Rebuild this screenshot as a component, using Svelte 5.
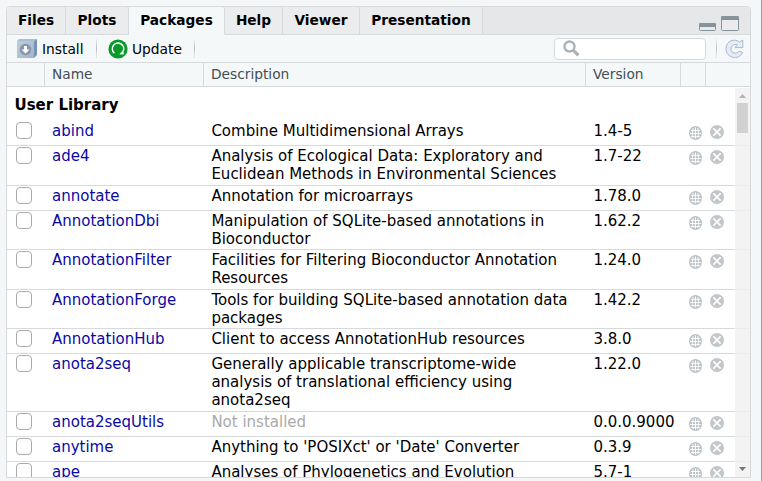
<script>
  const tabs = [
    { label: 'Files', width: 59 },
    { label: 'Plots', width: 63 },
    { label: 'Packages', width: 96 },
    { label: 'Help', width: 58 },
    { label: 'Viewer', width: 77 },
    { label: 'Presentation', width: 123 }
  ];
  let active = $state('Packages');

  const packages = [
    { name: 'abind', desc: ['Combine Multidimensional Arrays'], version: '1.4-5', height: 25 },
    { name: 'ade4', desc: ['Analysis of Ecological Data: Exploratory and', 'Euclidean Methods in Environmental Sciences'], version: '1.7-22', height: 40 },
    { name: 'annotate', desc: ['Annotation for microarrays'], version: '1.78.0', height: 25 },
    { name: 'AnnotationDbi', desc: ['Manipulation of SQLite-based annotations in', 'Bioconductor'], version: '1.62.2', height: 39 },
    { name: 'AnnotationFilter', desc: ['Facilities for Filtering Bioconductor Annotation', 'Resources'], version: '1.24.0', height: 40 },
    { name: 'AnnotationForge', desc: ['Tools for building SQLite-based annotation data', 'packages'], version: '1.42.2', height: 39 },
    { name: 'AnnotationHub', desc: ['Client to access AnnotationHub resources'], version: '3.8.0', height: 25 },
    { name: 'anota2seq', desc: ['Generally applicable transcriptome-wide', 'analysis of translational efficiency using', 'anota2seq'], version: '1.22.0', height: 58 },
    { name: 'anota2seqUtils', desc: ['Not installed'], version: '0.0.0.9000', height: 25, missing: true },
    { name: 'anytime', desc: ["Anything to 'POSIXct' or 'Date' Converter"], version: '0.3.9', height: 25 },
    { name: 'ape', desc: ['Analyses of Phylogenetics and Evolution'], version: '5.7-1', height: 25 }
  ];
</script>

<div class="window">
  <section class="panel">
    <nav class="tabs">
      {#each tabs as tab}
        <button class="tab" class:active={active === tab.label} style:width="{tab.width}px" onclick={() => (active = tab.label)}>{tab.label}</button>
      {/each}
      <div class="controls">
        <svg width="17" height="8" viewBox="0 0 17 8"><rect x=".5" y=".5" width="16" height="7" rx="1" fill="#e8eaeb" stroke="#87939a" /><path d="M1 0h15l1 1v3H0V1z" fill="#87939a" /></svg>
        <svg width="18" height="15" viewBox="0 0 18 15"><rect x=".5" y=".5" width="17" height="14" rx="1" fill="#e9ebec" stroke="#87939a" /><path d="M1 0h16l1 1v3H0V1z" fill="#87939a" /></svg>
      </div>
    </nav>

    <div class="toolbar">
      <svg class="install" width="21" height="19" viewBox="0 0 21 19">
        <defs><linearGradient id="box" x2="1" y2="1"><stop stop-color="#bfcfdf" /><stop offset="1" stop-color="#a0b4cb" /></linearGradient></defs>
        <path d="M0 2l2-2h18l-3 2z" fill="#a9bed3" /><path d="M17 2l3-2v16l-3 3z" fill="#7894b2" /><path d="M0 2h17v17H0z" fill="url(#box)" />
        <circle cx="8.5" cy="10.5" r="5.8" fill="#8798ab" /><path d="M7 7h3v3.5h2.5l-4 4-4-4H7z" fill="#fff" />
      </svg>
      <span class="label install-label">Install</span>
      <i class="sep"></i>
      <svg class="update" width="20" height="20" viewBox="0 0 20 20">
        <circle cx="10" cy="10" r="9.6" fill="#079a2b" />
        <path d="M6.4 14.2A5.7 5.7 0 1 1 15.3 12" fill="none" stroke="#fff" stroke-width="1.6" /><path d="M11.3 15.2l4.6.4-.5-4.6z" fill="#fff" />
      </svg>
      <span class="label update-label">Update</span>
      <i class="sep"></i>
      <div class="search">
        <svg width="17" height="17" viewBox="0 0 17 17" fill="none" stroke="#aab3b7"><circle cx="6.5" cy="6.5" r="5" stroke-width="2.4" /><path d="M10.2 10.2l5.2 5.2" stroke-width="3.2" /></svg>
      </div>
      <i class="sep"></i>
      <svg class="refresh" width="19" height="20" viewBox="0 0 19 20"><path d="M14.6 3.1L17.8 1v7.6h-8L12.6 6C9.2 4.6 6 6.5 6 10c0 4.4 5.8 5.7 8 2.1l3.7 1.5C13.8 21.6 1 19.3 1 9.9 1 1.8 9.4-1.2 14.6 3.1z" fill="#e3ecf8" stroke="#adb7c8" /></svg>
    </div>

    <div class="columns head">
      <span></span><span>Name</span><span>Description</span><span>Version</span><span></span><span></span>
    </div>

    <div class="body">
      <div class="list">
        <h2>User Library</h2>
        {#each packages as pkg}
          <div class="columns row" style:height="{pkg.height}px">
            <span class="check"><input type="checkbox" aria-label={pkg.name} /></span>
            <span class="name">{pkg.name}</span>
            <span class:missing={pkg.missing}>{#each pkg.desc as line}<div>{line}</div>{/each}</span>
            <span>{pkg.version}</span>
            <span class="icon globe">
              <svg width="13" height="14" viewBox="0 0 13 14"><ellipse cx="6.5" cy="7" rx="6.5" ry="6.9" fill="#bcc3c7" /><path d="M6.5 1.3v11.4M1 7.5h11M2 4.5h9M2 10.5h9M4.2 2Q2.6 7 4.2 12M8.8 2Q10.4 7 8.8 12" fill="none" stroke="#fff" stroke-width=".9" /></svg>
            </span>
            <span class="icon remove">
              <svg width="14" height="14" viewBox="0 0 14 14"><circle cx="7" cy="7" r="7" fill="#c1c7cb" /><path d="M3.4 3.4l7.2 7.2M10.6 3.4l-7.2 7.2" stroke="#fff" stroke-width="1.7" /></svg>
            </span>
          </div>
        {/each}
      </div>
      <div class="scrollbar">
        <svg width="7" height="4" viewBox="0 0 7 4"><path d="M0 4h7L3.5 0z" fill="#b4b4b4" /></svg>
        <div class="thumb"></div>
        <svg class="down" width="7" height="4" viewBox="0 0 7 4"><path d="M0 0h7L3.5 4z" fill="#777" /></svg>
      </div>
    </div>
  </section>
</div>

<style>
  :global(body) { margin: 0; }
  .window {
    box-sizing: border-box;
    width: 762px;
    height: 481px;
    padding: 6px 10px 3px 6px;
    border-right: 1px solid #999da0;
    background: #f5f6f8;
    overflow: hidden;
    font-family: "DejaVu Sans", sans-serif;
    color: #000;
  }
  .panel {
    box-sizing: border-box;
    width: 745px;
    height: 472px;
    display: flex;
    flex-direction: column;
    border: 1px solid #d6dadc;
    border-radius: 4px 4px 0 0;
    background: #f4f8f9;
    overflow: hidden;
  }
  svg { display: block; flex: none; }
  .tabs {
    display: flex;
    height: 28px;
    flex: none;
    background: #e6e7e8;
    box-shadow: inset 0 -1px #d6dadc;
  }
  .tab {
    box-sizing: border-box;
    padding: 0 0 1px;
    border: 0;
    border-right: 1px solid #d6dadc;
    border-bottom: 1px solid #d6dadc;
    border-radius: 0 3px 0 0;
    background: #ebecee;
    font: bold 13.7px/26px "DejaVu Sans", sans-serif;
    color: #000;
    white-space: nowrap;
  }
  .tab.active { background: #f4f8f9; border-bottom-color: #f4f8f9; }
  .controls { display: flex; align-items: flex-end; gap: 5px; margin-left: auto; padding: 0 11px 4px 0; }
  .toolbar {
    box-sizing: border-box;
    display: flex;
    align-items: center;
    height: 28px;
    flex: none;
    padding: 0 6px 0 10px;
    border-bottom: 1px solid #d6dadc;
    font-size: 13.8px;
  }
  .label { flex: none; padding-top: 1px; }
  .install-label { width: 54px; margin-left: 4px; }
  .update { margin-left: 11px; }
  .update-label { width: 62px; margin-left: 4px; }
  .sep { width: 1px; height: 19px; flex: none; background: linear-gradient(#e4e8e9, #b9bdbe, #e4e8e9); box-shadow: 1px 0 #fbfdfd; }
  .search {
    box-sizing: border-box;
    display: flex;
    align-items: center;
    width: 152px;
    height: 22px;
    margin: 0 10px 0 auto;
    padding-left: 8px;
    border: 1px solid #d6dadc;
    border-radius: 4px;
    background: #fff;
  }
  .refresh { margin-left: 8px; }
  .columns { display: grid; grid-template-columns: 38px 159px 382px 95px 25px 1fr; flex: none; }
  .head {
    box-sizing: border-box;
    height: 24px;
    border-bottom: 1px solid #d6dadc;
    font-size: 13.75px;
    line-height: 23px;
    color: #444d54;
  }
  .head span { box-sizing: border-box; padding-left: 7px; border-right: 1px solid #d6dadc; }
  .head span:last-child { border: 0; }
  .body { display: flex; flex: 1; min-height: 0; padding-top: 1px; background: #fff; }
  .list { width: 743px; flex: none; overflow: hidden; }
  h2 { box-sizing: border-box; height: 33px; margin: 0; padding: 1px 0 0 7.5px; font-size: 15px; line-height: 32px; }
  .row {
    box-sizing: border-box;
    padding-top: 1px;
    border-bottom: 1px solid #d6dadc;
    font-size: 15px;
    line-height: 18px;
    white-space: nowrap;
  }
  .row > span { padding-left: 7.4px; }
  .row > .name { padding-left: 7px; color: #0b08a5; }
  .row > .missing { color: #aaa; }
  .row > .check { padding: 0 0 0 9px; }
  input {
    appearance: none;
    box-sizing: border-box;
    display: block;
    width: 16px;
    height: 17px;
    margin: 0;
    border: 1px solid #aaaaaa;
    border-radius: 4px;
    background: #fff;
  }
  .row > .globe { padding: 4px 0 0 8px; }
  .row > .remove { padding: 3px 0 0 4px; }
  .scrollbar {
    box-sizing: border-box;
    display: flex;
    flex: none;
    flex-direction: column;
    align-items: center;
    width: 15px;
    margin-left: -15px;
    padding: 6px 0 6px;
    background: rgba(240, 240, 240, 0.8);
    z-index: 1;
  }
  .thumb { width: 11px; height: 30px; margin-top: 5px; background: #d1d1d1; }
  .down { margin-top: auto; }
</style>
